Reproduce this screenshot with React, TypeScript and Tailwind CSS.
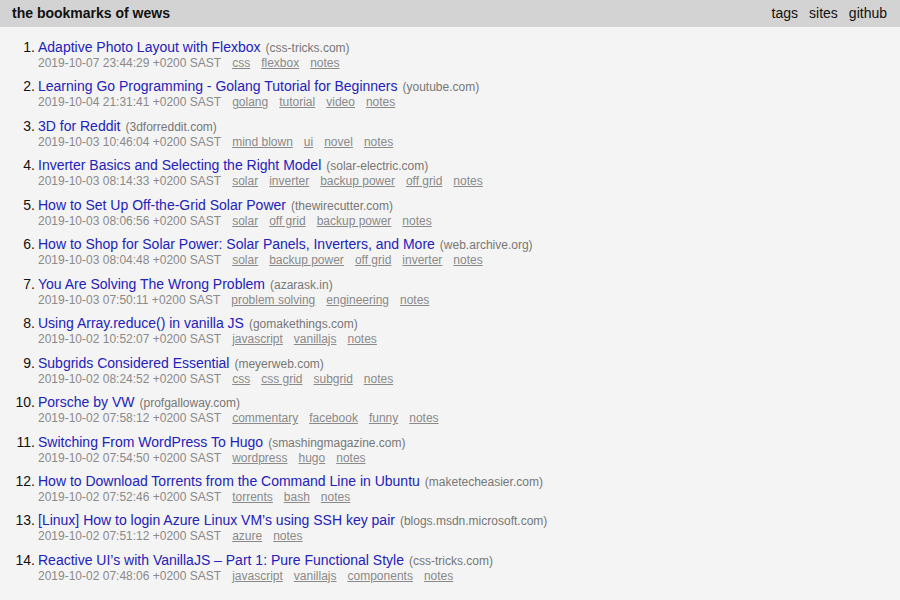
import React from "react";

type Item = { title: string; site: string; date: string; tags: string[] };

const items: Item[] = [
  { title: "Adaptive Photo Layout with Flexbox", site: "css-tricks.com", date: "2019-10-07 23:44:29 +0200 SAST", tags: ["css", "flexbox", "notes"] },
  { title: "Learning Go Programming - Golang Tutorial for Beginners", site: "youtube.com", date: "2019-10-04 21:31:41 +0200 SAST", tags: ["golang", "tutorial", "video", "notes"] },
  { title: "3D for Reddit", site: "3dforreddit.com", date: "2019-10-03 10:46:04 +0200 SAST", tags: ["mind blown", "ui", "novel", "notes"] },
  { title: "Inverter Basics and Selecting the Right Model", site: "solar-electric.com", date: "2019-10-03 08:14:33 +0200 SAST", tags: ["solar", "inverter", "backup power", "off grid", "notes"] },
  { title: "How to Set Up Off-the-Grid Solar Power", site: "thewirecutter.com", date: "2019-10-03 08:06:56 +0200 SAST", tags: ["solar", "off grid", "backup power", "notes"] },
  { title: "How to Shop for Solar Power: Solar Panels, Inverters, and More", site: "web.archive.org", date: "2019-10-03 08:04:48 +0200 SAST", tags: ["solar", "backup power", "off grid", "inverter", "notes"] },
  { title: "You Are Solving The Wrong Problem", site: "azarask.in", date: "2019-10-03 07:50:11 +0200 SAST", tags: ["problem solving", "engineering", "notes"] },
  { title: "Using Array.reduce() in vanilla JS", site: "gomakethings.com", date: "2019-10-02 10:52:07 +0200 SAST", tags: ["javascript", "vanillajs", "notes"] },
  { title: "Subgrids Considered Essential", site: "meyerweb.com", date: "2019-10-02 08:24:52 +0200 SAST", tags: ["css", "css grid", "subgrid", "notes"] },
  { title: "Porsche by VW", site: "profgalloway.com", date: "2019-10-02 07:58:12 +0200 SAST", tags: ["commentary", "facebook", "funny", "notes"] },
  { title: "Switching From WordPress To Hugo", site: "smashingmagazine.com", date: "2019-10-02 07:54:50 +0200 SAST", tags: ["wordpress", "hugo", "notes"] },
  { title: "How to Download Torrents from the Command Line in Ubuntu", site: "maketecheasier.com", date: "2019-10-02 07:52:46 +0200 SAST", tags: ["torrents", "bash", "notes"] },
  { title: "[Linux] How to login Azure Linux VM\u2019s using SSH key pair", site: "blogs.msdn.microsoft.com", date: "2019-10-02 07:51:12 +0200 SAST", tags: ["azure", "notes"] },
  { title: "Reactive UI\u2019s with VanillaJS \u2013 Part 1: Pure Functional Style", site: "css-tricks.com", date: "2019-10-02 07:48:06 +0200 SAST", tags: ["javascript", "vanillajs", "components", "notes"] },
];

export default function App() {
  return (
    <div className="min-h-[600px] w-full bg-[#f4f4f4] font-['Liberation_Sans',Arial,sans-serif]">
      <header className="flex h-[27px] items-center justify-between bg-[#d3d3d3] pl-[12px] pr-[13px]">
        <div className="text-[14px] font-bold text-[#111]">the bookmarks of wews</div>
        <nav className="flex gap-[11px] text-[14px] text-[#111]">
          <span>tags</span>
          <span>sites</span>
          <span>github</span>
        </nav>
      </header>
      <ol className="pt-[12px]">
        {items.map((it, i) => (
          <li key={i} className="flex h-[39.46px]">
            <span className="h-[16px] w-[38px] shrink-0 pr-[3px] text-right text-[14px] leading-[16px] text-[#111]">{i + 1}.</span>
            <div className="flex flex-col">
              <div className="flex h-[16px] items-baseline text-[14px] leading-[16px] whitespace-nowrap">
                <span className="text-[#2222bb]">{it.title}</span>
                <span className="ml-[5px] text-[12px] leading-[16px] text-[#777]">({it.site})</span>
              </div>
              <div className="flex h-[14px] text-[12px] leading-[16px] text-[#8a8a8a] whitespace-nowrap">
                <span>{it.date}</span>
                {it.tags.map((t) => (
                  <span key={t} className="ml-[11px] underline">{t}</span>
                ))}
              </div>
            </div>
          </li>
        ))}
      </ol>
    </div>
  );
}
